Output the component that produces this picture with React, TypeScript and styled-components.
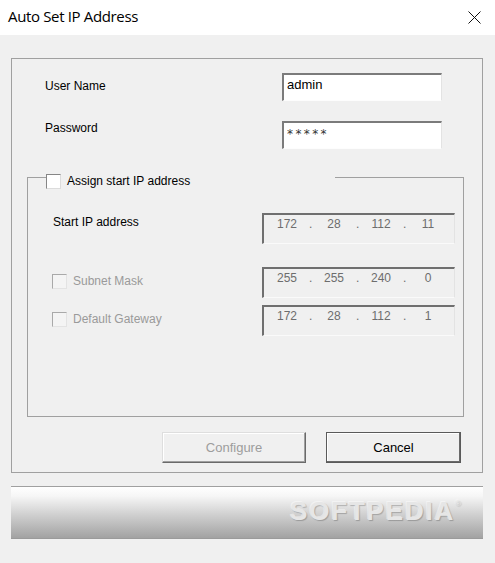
import React from "react";
import styled, { createGlobalStyle } from "styled-components";

const GlobalStyle = createGlobalStyle`
  html, body {
    margin: 0;
    padding: 0;
  }
  body {
    background: #f0f0f0;
    font-family: "Liberation Sans", Arial, sans-serif;
    font-size: 12px;
    color: #000;
    overflow: hidden;
  }
  * {
    box-sizing: border-box;
  }
`;

const Window = styled.div`
  width: 495px;
  height: 563px;
  background: #f0f0f0;
`;

const TitleBar = styled.div`
  height: 35px;
  background: #fff;
  display: flex;
  justify-content: space-between;
  align-items: flex-start;
  padding: 6px 14px 0 8px;
`;

const Title = styled.div`
  font-family: "Open Sans", "Noto Sans", sans-serif;
  font-size: 15px;
  letter-spacing: -0.35px;
  line-height: 20px;
  color: #000;
`;

const CloseIcon = styled.svg`
  margin-top: 5px;
  width: 13px;
  height: 13px;
`;

const Content = styled.div`
  padding: 23px 12px 0 11px;
`;

const Frame = styled.div`
  border: 1px solid #a0a0a0;
  padding: 14px 0 9px 0;
`;

const FormGrid = styled.div`
  display: grid;
  grid-template-columns: 270px 160px;
  row-gap: 20px;
`;

const FieldLabel = styled.div<{ $offset: number }>`
  padding-left: 33px;
  margin-top: ${(p) => p.$offset}px;
  font-size: 12px;
  line-height: 15px;
`;

const TextInput = styled.input<{ $secret?: boolean }>`
  width: 160px;
  height: 28px;
  margin: 0;
  border-style: solid;
  border-width: 2px 1px 1px 2px;
  border-color: #7b7b7b #e3e3e3 #fdfdfd #7b7b7b;
  background: #fff;
  padding: ${(p) => (p.$secret ? "3px 3px 7px 3px" : "2px 3px 8px 3px")};
  font-family: ${(p) => (p.$secret ? '"DejaVu Sans", sans-serif' : '"Liberation Sans", Arial, sans-serif')};
  font-size: ${(p) => (p.$secret ? "12px" : "13px")};
  letter-spacing: ${(p) => (p.$secret ? "2.4px" : "0")};
  line-height: 15px;
  color: ${(p) => (p.$secret ? "#333" : "#000")};
  outline: none;
`;

const GroupBox = styled.div`
  position: relative;
  margin: 28px 18px 0 15px;
  border: 1px solid #a0a0a0;
  padding: 35px 0 80px 0;
`;

const GroupLegend = styled.div`
  position: absolute;
  top: -5px;
  left: 18px;
  width: 289px;
  height: 16px;
  background: #f0f0f0;
  display: flex;
  align-items: flex-start;
  gap: 6px;
  line-height: 14px;
`;

const CheckBox = styled.span<{ $disabled?: boolean }>`
  display: inline-block;
  flex: none;
  width: 15px;
  height: 15px;
  margin-top: 1px;
  border: 1px solid;
  border-color: ${(p) =>
    p.$disabled ? "#a9a9a9 #e3e3e3 #e3e3e3 #a9a9a9" : "#868686 #dcdcdc #dcdcdc #868686"};
  background: ${(p) => (p.$disabled ? "#f4f4f4" : "#fff")};
`;

const CheckText = styled.span<{ $disabled?: boolean }>`
  color: ${(p) => (p.$disabled ? "#9a9a9a" : "#000")};
  line-height: 14px;
  padding-top: 1px;
`;

const IpRow = styled.div<{ $gap: number }>`
  display: flex;
  margin-top: ${(p) => p.$gap}px;
`;

const RowLead = styled.div<{ $indent: number; $offset: number }>`
  width: 234px;
  display: flex;
  align-items: flex-start;
  gap: 6px;
  padding-left: ${(p) => p.$indent}px;
  margin-top: ${(p) => p.$offset}px;
  line-height: 14px;
`;

const IpBox = styled.div`
  width: 193px;
  height: 31px;
  border-style: solid;
  border-width: 2px 1px 1px 2px;
  border-color: #6f6f6f #e3e3e3 #fafafa #6f6f6f;
  background: #f0f0f0;
  padding: 2px 0 0 1px;
  display: flex;
  align-items: flex-start;
  color: #6d6d6d;
  font-size: 12px;
  line-height: 14px;
`;

const IpSegment = styled.span`
  width: 44px;
  text-align: center;
`;

const IpDot = styled.span`
  width: 3px;
  text-align: center;
`;

const ButtonRow = styled.div`
  display: flex;
  justify-content: flex-end;
  gap: 20px;
  margin-top: 15px;
  padding-right: 21px;
`;

const Button = styled.button<{ $width: number; $default?: boolean }>`
  width: ${(p) => p.$width}px;
  height: 31px;
  margin: 0;
  padding: 0;
  font-family: "Liberation Sans", Arial, sans-serif;
  font-size: 13px;
  background: #f0f0f0;
  color: #000;
  border: 1px solid;
  border-color: ${(p) => (p.$default ? "#5a5a5a" : "#dedede #6a6a6a #6a6a6a #dedede")};
  box-shadow: ${(p) =>
    p.$default
      ? "inset -1px -1px 0 #6a6a6a, inset 1px 1px 0 #fff"
      : "inset -1px -1px 0 #a0a0a0, inset 1px 1px 0 #fff"};

  &:disabled {
    color: #9d9d9d;
  }
`;

const Banner = styled.div`
  margin-top: 13px;
  height: 53px;
  border-top: 1px solid #a0a0a0;
  border-bottom: 1px solid #9a9a9a;
  background: linear-gradient(#ffffff 0%, #f6f6f6 18%, #cfcfcf 55%, #a2a2a2 100%);
  display: flex;
  justify-content: flex-end;
  align-items: flex-start;
  padding: 3px 22px 0 0;
`;

const Watermark = styled.div`
  font-family: "Liberation Sans", Arial, sans-serif;
  font-weight: bold;
  font-size: 26px;
  line-height: 28px;
  letter-spacing: 1.8px;
  color: #e6e6e6;
  text-shadow: 1px 1px 1px rgba(0, 0, 0, 0.22), -1px -1px 0 rgba(255, 255, 255, 0.45);

  sup {
    font-size: 8px;
    vertical-align: 14px;
    letter-spacing: 0;
  }
`;

const ipRows = [
  { label: "Subnet Mask", parts: ["255", "255", "240", "0"], gap: 23 },
  { label: "Default Gateway", parts: ["172", "28", "112", "1"], gap: 7 },
];

const IpField = ({ parts }: { parts: string[] }) => (
  <IpBox>
    {parts.map((part, i) => (
      <React.Fragment key={i}>
        {i > 0 && <IpDot>.</IpDot>}
        <IpSegment>{part}</IpSegment>
      </React.Fragment>
    ))}
  </IpBox>
);

const App = () => {
  return (
    <Window>
      <GlobalStyle />
      <TitleBar>
        <Title>Auto Set IP Address</Title>
        <CloseIcon viewBox="0 0 13 13">
          <path d="M0.5 0.5 L12.5 12.5 M12.5 0.5 L0.5 12.5" stroke="#111" strokeWidth="1" fill="none" />
        </CloseIcon>
      </TitleBar>

      <Content>
        <Frame>
          <FormGrid>
            <FieldLabel $offset={6}>User Name</FieldLabel>
            <TextInput readOnly value="admin" />
            <FieldLabel $offset={0}>Password</FieldLabel>
            <TextInput readOnly $secret value="*****" />
          </FormGrid>

          <GroupBox>
            <GroupLegend>
              <CheckBox />
              <CheckText>Assign start IP address</CheckText>
            </GroupLegend>

            <IpRow $gap={0}>
              <RowLead $indent={25} $offset={2}>
                Start IP address
              </RowLead>
              <IpField parts={["172", "28", "112", "11"]} />
            </IpRow>

            {ipRows.map((row) => (
              <IpRow key={row.label} $gap={row.gap}>
                <RowLead $indent={24} $offset={6}>
                  <CheckBox $disabled />
                  <CheckText $disabled>{row.label}</CheckText>
                </RowLead>
                <IpField parts={row.parts} />
              </IpRow>
            ))}
          </GroupBox>

          <ButtonRow>
            <Button $width={144} disabled>
              Configure
            </Button>
            <Button $width={135} $default>
              Cancel
            </Button>
          </ButtonRow>
        </Frame>

        <Banner>
          <Watermark>
            SOFTPEDIA<sup>®</sup>
          </Watermark>
        </Banner>
      </Content>
    </Window>
  );
};

export default App;
